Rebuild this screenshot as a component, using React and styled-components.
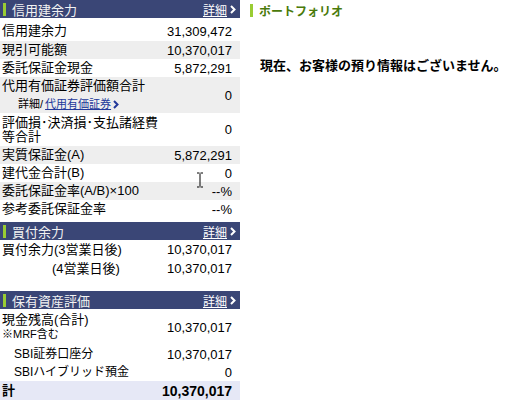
import React from 'react';
import styled, { createGlobalStyle } from 'styled-components';

const GlobalStyle = createGlobalStyle`
  body {
    margin: 0;
    background: #fff;
    color: #000;
    font-family: "Liberation Sans", "Noto Sans CJK JP", sans-serif;
    font-size: 13px;
  }
`;

const Page = styled.div`
  position: relative;
  display: flex;
  gap: 10px;
  width: 526px;
`;

const LeftCol = styled.div`
  width: 240px;
  flex-shrink: 0;
`;

const Panel = styled.div`
  margin-bottom: ${p => p.gap || 0}px;
`;

const PanelHeader = styled.div`
  display: flex;
  align-items: center;
  justify-content: space-between;
  height: 18px;
  padding: 0 4px 0 3px;
  background: #3a4676;
  color: #fff;
`;

const Title = styled.div`
  display: flex;
  align-items: center;
  font-size: 13px;
  color: #f2f2f2;
`;

const Mark = styled.span`
  display: inline-block;
  width: 3px;
  height: 13px;
  margin-right: 6px;
  background: ${p => p.color || '#9c3'};
`;

const DetailLink = styled.a`
  display: flex;
  align-items: center;
  gap: 3px;
  color: #fff;
  font-size: 12px;
  text-decoration: underline;
`;

const Row = styled.div`
  display: flex;
  align-items: center;
  justify-content: space-between;
  height: ${p => p.h || 18}px;
  padding: ${p => p.pt || 0}px 8px 0 ${p => p.indent || 2}px;
  background: ${p => (p.shade ? '#eeeeee' : p.total ? '#e6e8f6' : '#fff')};
  font-weight: ${p => (p.total ? 'bold' : 'normal')};
  font-size: ${p => p.size || 13}px;
`;

const Label = styled.div`
  display: flex;
  flex-direction: column;
  line-height: ${p => p.lh || 14}px;
`;

const SubLine = styled.div`
  display: flex;
  align-items: center;
  gap: 2px;
  font-size: ${p => p.size || 11}px;
  padding-left: ${p => p.indent || 0}px;
  margin-top: ${p => p.mt || 0}px;
`;

const BlueLink = styled.a`
  color: #23399a;
  text-decoration: underline;
`;

const Value = styled.div`
  font-size: ${p => p.size || 13}px;
  white-space: nowrap;
`;

const RightCol = styled.div`
  flex: 1;
  padding-top: 2px;
`;

const GreenHead = styled.div`
  display: flex;
  align-items: center;
  color: #4a7a0a;
  font-weight: bold;
  font-size: 12px;
`;

const Message = styled.div`
  margin-top: 36px;
  padding-left: 10px;
  font-weight: bold;
  font-size: 13px;
`;

const Cursor = styled.svg`
  position: absolute;
  left: 196px;
  top: 172px;
`;

const Chevron = ({ color = '#fff' }) => (
  <svg width="6" height="9" viewBox="0 0 6 9">
    <polyline points="1,1 4.5,4.5 1,8" fill="none" stroke={color} strokeWidth="2" />
  </svg>
);

const Header = ({ title }) => (
  <PanelHeader>
    <Title>
      <Mark />
      {title}
    </Title>
    <DetailLink>
      詳細
      <Chevron />
    </DetailLink>
  </PanelHeader>
);

export default function App() {
  return (
    <>
      <GlobalStyle />
      <Page>
        <LeftCol>
          <Panel gap={4}>
            <Header title="信用建余力" />
            <Row h={20} pt={3}>
              <Label>信用建余力</Label>
              <Value>31,309,472</Value>
            </Row>
            <Row shade>
              <Label>現引可能額</Label>
              <Value>10,370,017</Value>
            </Row>
            <Row>
              <Label>委託保証金現金</Label>
              <Value>5,872,291</Value>
            </Row>
            <Row shade h={36}>
              <Label lh={16}>
                代用有価証券評価額合計
                <SubLine indent={16} mt={2}>
                  詳細/ <BlueLink>代用有価証券</BlueLink>
                  <Chevron color="#23399a" />
                </SubLine>
              </Label>
              <Value>0</Value>
            </Row>
            <Row h={33}>
              <Label lh={14}>
                <span>評価損･決済損･支払諸経費</span>
                <span>等合計</span>
              </Label>
              <Value>0</Value>
            </Row>
            <Row shade>
              <Label>実質保証金(A)</Label>
              <Value>5,872,291</Value>
            </Row>
            <Row>
              <Label>建代金合計(B)</Label>
              <Value>0</Value>
            </Row>
            <Row shade>
              <Label>委託保証金率(A/B)×100</Label>
              <Value>--%</Value>
            </Row>
            <Row>
              <Label>参考委託保証金率</Label>
              <Value>--%</Value>
            </Row>
          </Panel>

          <Panel gap={13}>
            <Header title="買付余力" />
            <Row h={19}>
              <Label>買付余力(3営業日後)</Label>
              <Value>10,370,017</Value>
            </Row>
            <Row h={19} indent={52}>
              <Label>(4営業日後)</Label>
              <Value>10,370,017</Value>
            </Row>
          </Panel>

          <Panel>
            <Header title="保有資産評価" />
            <Row h={36}>
              <Label lh={15}>
                現金残高(合計)
                <SubLine size={11}>※MRF含む</SubLine>
              </Label>
              <Value>10,370,017</Value>
            </Row>
            <Row indent={14} size={12}>
              <Label>SBI証券口座分</Label>
              <Value>10,370,017</Value>
            </Row>
            <Row indent={14} size={12}>
              <Label>SBIハイブリッド預金</Label>
              <Value>0</Value>
            </Row>
            <Row total h={19}>
              <Label>計</Label>
              <Value size={14}>10,370,017</Value>
            </Row>
          </Panel>
        </LeftCol>

        <RightCol>
          <GreenHead>
            <Mark color="#9c3" />
            ポートフォリオ
          </GreenHead>
          <Message>現在、お客様の預り情報はございません。</Message>
        </RightCol>

        <Cursor width="8" height="16" viewBox="0 0 8 16">
          <path d="M1 1h2.5M4.5 1H7M4 1.5v13M1 15h2.5M4.5 15H7" stroke="#000" strokeWidth="1" fill="none" />
        </Cursor>
      </Page>
    </>
  );
}
